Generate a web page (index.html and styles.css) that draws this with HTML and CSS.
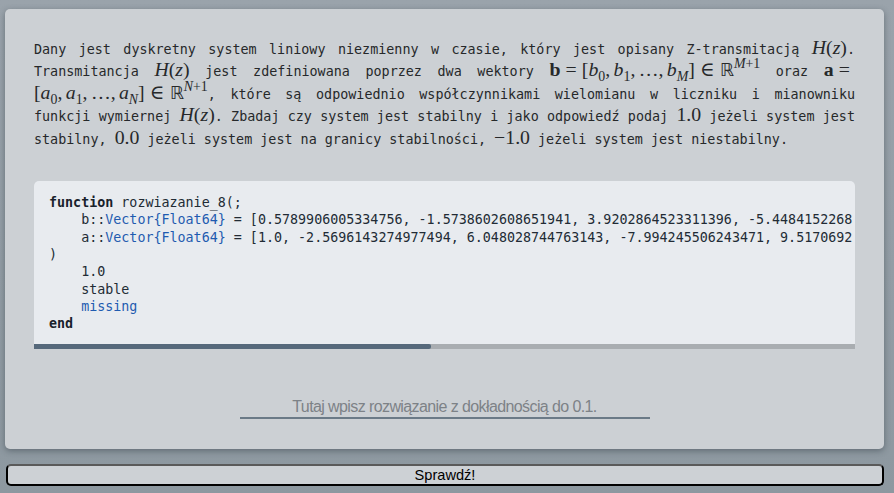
FILE: index.html
```html
<!DOCTYPE html>
<html lang="pl">
<head>
<meta charset="utf-8">
<title>Zadanie</title>
<link rel="stylesheet" href="styles.css">
</head>
<body>
<main class="card">
  <p class="task">Dany jest dyskretny system liniowy niezmienny w czasie, który jest opisany Z-transmitacją <span class="m"><i>H</i>(<i>z</i>)</span>. Transmitancja <span class="m"><i>H</i>(<i>z</i>)</span> jest zdefiniowana poprzez dwa wektory <span class="m"><b>b</b><span class="rel">=</span>[<i>b</i><sub>0</sub>,<span class="th"></span><i>b</i><sub>1</sub>,<span class="th"></span>…,<span class="th"></span><i>b</i><sub><i>M</i></sub>]<span class="rel">∈</span><span class="bb">ℝ</span><sup><i>M</i>+1</sup></span> oraz <span class="m"><b>a</b><span class="rel">=</span></span><wbr><span class="m">[<i>a</i><sub>0</sub>,<span class="th"></span><i>a</i><sub>1</sub>,<span class="th"></span>…,<span class="th"></span><i>a</i><sub><i>N</i></sub>]<span class="rel">∈</span><span class="bb">ℝ</span><sup><i>N</i>+1</sup></span>, które są odpowiednio współczynnikami wielomianu w liczniku i mianowniku funkcji wymiernej <span class="m"><i>H</i>(<i>z</i>)</span>. Zbadaj czy system jest stabilny i jako odpowiedź podaj <span class="m">1.0</span> jeżeli system jest stabilny, <span class="m">0.0</span> jeżeli system jest na granicy stabilności, <span class="m">−1.0</span> jeżeli system jest niestabilny.</p>

  <div class="code-box">
    <pre class="code"><code><span class="kw">function</span> rozwiazanie_8(;
    b::<span class="ty">Vector{Float64}</span> = [0.5789906005334756, -1.5738602608651941, 3.9202864523311396, -5.4484152268
    a::<span class="ty">Vector{Float64}</span> = [1.0, -2.5696143274977494, 6.048028744763143, -7.994245506243471, 9.5170692
)
    1.0
    stable
    <span class="ty">missing</span>
<span class="kw">end</span></code></pre>
    <div class="scrollbar"><div class="thumb"></div></div>
  </div>

  <div class="answer">
    <input class="answer-input" type="text" placeholder="Tutaj wpisz rozwiązanie z dokładnością do 0.1.">
  </div>
</main>
<button class="check" type="button">Sprawdź!</button>
</body>
</html>
```

FILE: styles.css
```css
html, body {
  margin: 0;
  height: 100%;
}
body {
  background: linear-gradient(#9aa3ab, #8d98a0);
  padding: 9px 10px 0 5px;
  box-sizing: border-box;
  font-family: "Liberation Sans", Arial, sans-serif;
}
.card {
  display: flex;
  flex-direction: column;
  height: 440px;
  box-sizing: border-box;
  padding: 30px 29px 0 29px;
  background: #ccd0d4;
  border-radius: 5px;
  box-shadow: 0 2px 6px rgba(40, 50, 60, 0.45);
}
.task {
  margin: 0;
  font-family: "DejaVu Sans Mono", monospace;
  font-size: 13.4px;
  line-height: 22.4px;
  color: #26282a;
  text-align: justify;
}
.m {
  white-space: nowrap;
  font-family: "Liberation Serif", "DejaVu Serif", serif;
  font-size: 19.8px;
  line-height: 0;
}
.m i {
  font-style: italic;
}
.m b {
  font-weight: bold;
}
.m sub, .m sup {
  font-size: 0.7em;
  line-height: 0;
}
.rel {
  margin: 0 0.26em;
}
.th {
  display: inline-block;
  width: 0.17em;
}
.bb {
  font-family: "DejaVu Sans", sans-serif;
  font-size: 0.9em;
}
.code-box {
  margin-top: 30px;
  background: #e8ebef;
  border-radius: 5px 5px 0 0;
  overflow: hidden;
}
.code {
  margin: 0;
  padding: 13px 15px 12px 15px;
  overflow: hidden;
  font-family: "DejaVu Sans Mono", monospace;
  font-size: 13.35px;
  line-height: 17.3px;
  color: #222b35;
}
.code code {
  font: inherit;
}
.scrollbar {
  height: 5px;
  background: #a9adb1;
}
.thumb {
  width: 48.3%;
  height: 100%;
  background: #56697b;
  border-radius: 0 2px 2px 0;
}
.kw {
  font-weight: bold;
  color: #18212b;
}
.ty {
  color: #1f5bb0;
}
.answer {
  display: flex;
  justify-content: center;
  margin-top: 45px;
}
.answer-input {
  width: 410px;
  height: 25px;
  box-sizing: border-box;
  padding: 3px 0 0 0;
  border: none;
  border-bottom: 2px solid #6b7a87;
  background: transparent;
  text-align: center;
  font-family: "Liberation Sans", Arial, sans-serif;
  font-size: 16px;
  letter-spacing: -0.6px;
  color: #333;
  outline: none;
}
.answer-input::placeholder {
  color: #7d8287;
}
.check {
  display: block;
  width: 878px;
  height: 22px;
  margin: 15px 0 0 1px;
  padding: 0;
  background: #cdd1d5;
  border: 2px solid #000;
  border-top-color: #5a5a5a;
  border-radius: 5px;
  font-family: "Liberation Sans", Arial, sans-serif;
  font-size: 14.6px;
  color: #000;
  line-height: 16px;
}
```
